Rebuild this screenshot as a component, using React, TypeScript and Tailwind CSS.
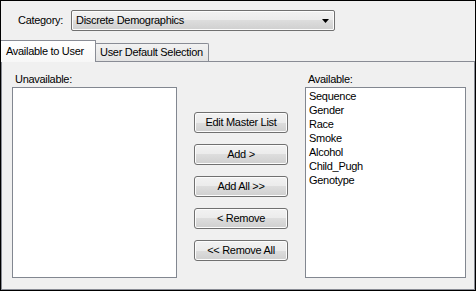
import React from "react";

const AVAILABLE = ["Sequence", "Gender", "Race", "Smoke", "Alcohol", "Child_Pugh", "Genotype"];
const ACTIONS = ["Edit Master List", "Add >", "Add All >>", "< Remove", "<< Remove All"];

function WinButton({ label }: { label: string }) {
  return (
    <button
      type="button"
      className="flex h-[21px] w-[94px] items-center justify-center rounded-[3px] border border-[#707070] bg-[linear-gradient(#f2f2f2_0%,#ebebeb_50%,#dddddd_50%,#cfcfcf_100%)] text-black shadow-[inset_0_0_0_1px_#fcfcfc]"
    >
      {label}
    </button>
  );
}

function ListBox({ items }: { items: string[] }) {
  return (
    <div className="h-[191px] border border-[#828790] bg-white pl-[3px] pt-[1px]">
      {items.map((item) => (
        <div key={item} className="h-[14px] leading-[14px]">
          {item}
        </div>
      ))}
    </div>
  );
}

export default function App() {
  return (
    <div className="flex h-[291px] w-[476px] flex-col whitespace-nowrap border border-black bg-[#f0f0f0] font-['Liberation_Sans',Arial,sans-serif] text-[11px] tracking-[-0.3px] text-black">
      {/* category picker */}
      <div className="flex h-[40px] items-start gap-[8px] pl-[17px] pt-[9px]">
        <span className="mt-[4px] leading-[13px]">Category:</span>
        <div className="flex h-[21px] w-[264px] items-center justify-between rounded-[2px] border border-[#707070] bg-[linear-gradient(#f2f2f2_0%,#ebebeb_50%,#dddddd_50%,#cfcfcf_100%)] pl-[4px] pr-[4px] shadow-[inset_0_0_0_1px_#fcfcfc]">
          <span>Discrete Demographics</span>
          <svg width="7" height="4" viewBox="0 0 7 4" className="mr-[1px]">
            <path d="M0 0h7L3.5 4z" fill="#000" />
          </svg>
        </div>
      </div>

      {/* tab strip */}
      <div className="flex h-[21px] items-end border-b border-[#898c95]">
        <div className="relative z-10 -mb-px flex h-[22px] w-[95px] items-start border-r border-t border-[#898c95] bg-[linear-gradient(#ffffff,#f7f7f7)] pl-[5px] pt-[4px] leading-[13px]">
          Available to User
        </div>
        <div className="flex h-[18px] w-[113px] items-start rounded-tr-[2px] border-r border-t border-[#898c95] bg-[linear-gradient(#f2f2f2,#e3e3e3)] pl-[4px] pt-[2px] leading-[13px]">
          User Default Selection
        </div>
      </div>

      {/* tab page */}
      <div className="flex flex-1 border-x border-b border-[#898c95] pl-[10px] pr-[7px] pt-[10px]">
        <div className="flex w-[165px] flex-col">
          <span className="h-[14px] pl-[3px] leading-[14px]">Unavailable:</span>
          <div className="mt-[1px]">
            <ListBox items={[]} />
          </div>
        </div>

        <div className="flex w-[128px] flex-col items-center gap-[11px] pt-[40px]">
          {ACTIONS.map((a) => (
            <WinButton key={a} label={a} />
          ))}
        </div>

        <div className="flex w-[161px] flex-col">
          <span className="h-[14px] pl-[3px] leading-[14px]">Available:</span>
          <div className="mt-[1px]">
            <ListBox items={AVAILABLE} />
          </div>
        </div>
      </div>
    </div>
  );
}
